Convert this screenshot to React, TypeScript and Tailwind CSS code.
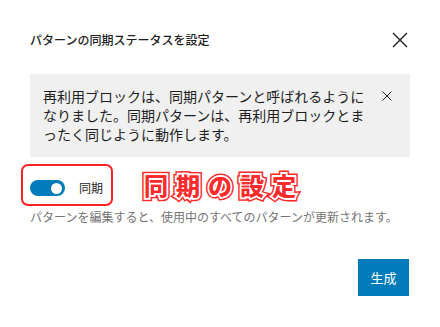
import React from "react";

function CloseIcon({ size, stroke }: { size: number; stroke: number }) {
  return (
    <svg width={size} height={size} viewBox="0 0 16 16" fill="none">
      <path d="M1 1L15 15M15 1L1 15" stroke="#1e1e1e" strokeWidth={stroke} />
    </svg>
  );
}

function Annotation({ text }: { text: string }) {
  const base =
    "col-start-1 row-start-1 text-[24px] font-bold tracking-[8px] leading-[30px] [paint-order:stroke_fill]";
  return (
    <div className="grid">
      <span className={`${base} text-[#ff2b2b] [-webkit-text-stroke:7px_#ff2b2b]`}>{text}</span>
      <span className={`${base} text-[#ff2b2b] [-webkit-text-stroke:4px_#ffffff]`}>{text}</span>
      <span className={`${base} text-[#ff2b2b]`}>{text}</span>
    </div>
  );
}

export default function App() {
  return (
    <div
      className="w-[440px] h-[327px] bg-white px-[30px] flex flex-col text-[#1e1e1e]"
      style={{ fontFamily: '"Noto Sans CJK JP", "Noto Sans", sans-serif' }}
    >
      {/* Header */}
      <div className="mt-[28px] h-[24px] flex items-center justify-between">
        <h1 className="text-[12px] font-medium">パターンの同期ステータスを設定</h1>
        <button className="mr-[2px]">
          <CloseIcon size={16} stroke={1.4} />
        </button>
      </div>

      {/* Notice */}
      <div className="mt-[22px] bg-[#f0f0f0] pl-[13px] pr-[12px] py-[13px] flex justify-between">
        <p className="w-[328px] text-[14px] leading-[19px]">
          再利用ブロックは、同期パターンと呼ばれるようになりました。同期パターンは、再利用ブロックとまったく同じように動作します。
        </p>
        <button className="mt-[4px] mr-[6px] self-start">
          <CloseIcon size={10} stroke={1.6} />
        </button>
      </div>

      {/* Toggle row */}
      <div className="mt-[16px] flex items-center">
        <div className="relative flex items-center h-[30px]">
          <div className="absolute -left-[9px] -top-[9px] w-[92px] h-[42px] rounded-[7px] border-[2.5px] border-[#f22]" />
          <div className="w-[35px] h-[16px] rounded-full bg-[#007cba] flex items-center justify-end pr-[3px]">
            <div className="w-[11px] h-[11px] rounded-full bg-white" />
          </div>
          <span className="ml-[14px] text-[12px]">同期</span>
        </div>
        <div className="ml-[41px] -mt-[6px]">
          <Annotation text="同期の設定" />
        </div>
      </div>

      <p className="mt-[5px] text-[12px] text-[#757575] leading-[18px]">
        パターンを編集すると、使用中のすべてのパターンが更新されます。
      </p>

      {/* Footer */}
      <div className="mt-[33px] flex justify-end pr-[1px]">
        <button className="w-[51px] h-[37px] bg-[#007cba] text-white text-[13px]">生成</button>
      </div>
    </div>
  );
}
